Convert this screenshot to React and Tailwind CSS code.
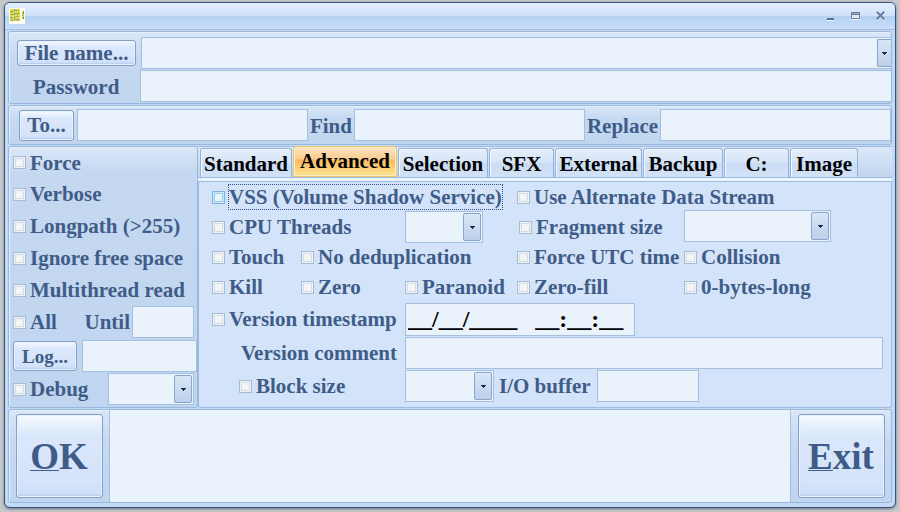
import { useState } from 'react';

const FIELD = 'bg-[#eaf2fb] border border-[#a5c0df] outline-none rounded-none';
const PANEL = 'border border-[#98b7dd] rounded-[3px] shadow-[inset_1px_1px_0_#e6f0fc]';
const PANEL_BG = 'bg-linear-to-b from-[#d9e6f8] via-[#c5d9f1] via-35% to-[#c0d5ef]';
const BUTTON = 'border border-[#839fc8] rounded-[3px] bg-[linear-gradient(#f6faff,#dae7fb_25%,#d5e3fb_80%,#cfdff8)] shadow-[inset_0_0_0_1px_#e9f2ff,inset_0_-2px_2px_#b5ccee]';

const TABS = [
  { name: 'Standard',  width: 'w-[92px]' },
  { name: 'Advanced',  width: 'w-[104px]' },
  { name: 'Selection', width: 'w-[90px]' },
  { name: 'SFX',       width: 'w-[65px]' },
  { name: 'External',  width: 'w-[87px]' },
  { name: 'Backup',    width: 'w-[80px]' },
  { name: 'C:',        width: 'w-[65px]' },
  { name: 'Image',     width: 'w-[68px]' },
];

function Check({ label, focused, className = '' }) {
  return (
    <label className={`flex items-center gap-1 whitespace-nowrap ${className}`}>
      <input
        type="checkbox"
        className={`appearance-none w-[13px] h-[13px] shrink-0 border checked:bg-[#5f86b8] ${
          focused
            ? 'border-[#7fb2e0] bg-[#e4f6ff] shadow-[inset_0_0_0_1px_#cdeafc,inset_0_0_0_2px_#9accef]'
            : 'border-[#a6bbd2] bg-[#f3f5f4] shadow-[inset_0_0_0_1px_#eef4f9,inset_0_0_0_2px_#d3dce2]'
        }`}
      />
      <span className={focused ? 'outline-1 outline-dotted outline-[#33508a]' : ''}>{label}</span>
    </label>
  );
}

function Combo({ label, className = '', flush }) {
  return (
    <div className={`relative h-8 ${className}`}>
      <select aria-label={label} className={`appearance-none w-full h-full block ${FIELD} ${flush ? 'border-r-0' : ''}`} />
      <span className={`absolute top-[2px] h-7 flex items-center justify-center border border-[#86a5cf] bg-linear-to-b from-[#d9e6f7] to-[#bdd0ea] pointer-events-none ${
        flush ? 'right-0 w-[14px] border-r-0 rounded-l-[2px]' : 'right-[2px] w-[18px] rounded-[2px]'
      }`}>
        <svg width="5" height="3" viewBox="0 0 5 3" shapeRendering="crispEdges">
          <path d="M0 0h5v1h-1v1h-1v1h-1v-1h-1v-1h-1z" fill="#1c2c47" />
        </svg>
      </span>
    </div>
  );
}

function TitleBar() {
  return (
    <div className="h-[27px] shrink-0 flex items-center justify-between pl-1 pr-[10px] rounded-t-[5px] border-b border-[#a3c0e4] bg-[linear-gradient(#e3eefd,#cfe1fa_48%,#b5d0f3_50%,#c9def9)]">
      <svg width="16" height="16" viewBox="0 0 16 16" shapeRendering="crispEdges" aria-hidden="true">
        <rect width="16" height="16" fill="#fdfdf0" />
        <path d="M1 1h10v12h-10z" fill="#dfe04e" />
        <path d="M1 3h4v1h-4zM6 2h4v1h-4zM1 6h4v1h-4zM6 5h5v1h-5zM1 9h3v1h-3zM6 8h4v1h-4zM1 12h4v1h-4zM6 11h5v1h-5z" fill="#a9ab62" />
        <path d="M5 1h1v2h-1zM5 5h1v2h-1zM5 9h1v3h-1zM2 4h1v1h-1zM8 6h1v1h-1zM2 10h1v1h-1zM8 12h1v1h-1z" fill="#8d9290" />
        <path d="M13 4h2v7h-2z" fill="#d2d34c" />
        <path d="M14 3h1v3h-1zM13 7h1v1h-1zM14 9h1v2h-1z" fill="#85894a" />
      </svg>
      <div className="flex items-center gap-[16px]">
        <button aria-label="Minimize">
          <svg width="8" height="10" viewBox="0 0 8 10" shapeRendering="crispEdges">
            <path d="M0 7h7v2h-7z" fill="#5b7194" />
            <path d="M0 9h7v1h-7z" fill="#f2f7fe" />
          </svg>
        </button>
        <button aria-label="Maximize">
          <svg width="9" height="8" viewBox="0 0 9 8" shapeRendering="crispEdges">
            <path d="M0 0h9v7h-9z" fill="#71829f" />
            <path d="M1 3h7v3h-7z" fill="#dce9fb" />
            <path d="M1 1h7v1h-7z" fill="#93a3bc" />
            <path d="M0 7h9v1h-9z" fill="#f2f7fe" />
          </svg>
        </button>
        <button aria-label="Close">
          <svg width="9" height="10" viewBox="0 0 9 10">
            <path d="M.8 1.8l7.4 7.4M8.2 1.8l-7.4 7.4" stroke="#f2f7fe" strokeWidth="1.6" />
            <path d="M.8 .8l7.4 7.4M8.2 .8l-7.4 7.4" stroke="#6a7c9b" strokeWidth="2" />
          </svg>
        </button>
      </div>
    </div>
  );
}

function SidePanel() {
  return (
    <div className={`w-[190px] shrink-0 flex flex-col gap-px pl-1 pb-[2px] ${PANEL} bg-linear-to-b from-[#dbe7f8] via-[#c4d8f1] via-10% to-[#c0d5ef]`}>
      <div>
        <Check label="Force" className="h-[31px]" />
        <Check label="Verbose" className="h-8" />
        <Check label="Longpath (>255)" className="h-8" />
        <Check label="Ignore free space" className="h-8" />
        <Check label="Multithread read" className="h-8" />
        <div className="h-8 flex items-center justify-between pr-[3px]">
          <Check label="All" />
          <div className="flex items-center gap-[2px]">
            <label htmlFor="until">Until</label>
            <input id="until" className={`w-[62px] h-8 ${FIELD}`} />
          </div>
        </div>
      </div>
      <div className="flex items-center gap-[5px] pt-px">
        <button className={`w-16 h-[30px] text-[19px] leading-none ${BUTTON}`}>Log...</button>
        <input aria-label="Log file" className={`flex-1 min-w-0 h-8 ${FIELD}`} />
      </div>
      <div className="flex items-center justify-between pr-[3px]">
        <Check label="Debug" />
        <Combo label="Debug level" className="w-[86px]" />
      </div>
    </div>
  );
}

function AdvancedTab() {
  return (
    <div className="flex-1 pl-[13px] pr-2 bg-[#d3e3f9] border border-t-0 border-[#9dbbe0] rounded-b-[3px]">
      <div className="grid grid-cols-[89fr_104fr_112fr_167fr_199fr] grid-rows-[30px_30px_30px_30px_34px_34px_32px] items-center">
        <Check label="VSS (Volume Shadow Service)" focused className="col-span-3" />
        <Check label="Use Alternate Data Stream" className="col-span-2" />

        <Check label="CPU Threads" className="col-span-2" />
        <Combo label="CPU Threads" className="w-[78px]" />
        <Check label="Fragment size" className="pl-[2px]" />
        <Combo label="Fragment size" className="w-[147px] self-end" />

        <Check label="Touch" />
        <Check label="No deduplication" className="col-span-2" />
        <Check label="Force UTC time" />
        <Check label="Collision" />

        <Check label="Kill" />
        <Check label="Zero" />
        <Check label="Paranoid" />
        <Check label="Zero-fill" />
        <Check label="0-bytes-long" />

        <Check label="Version timestamp" className="col-span-2" />
        <input
          aria-label="Version timestamp"
          defaultValue="__/__/____   __:__:__"
          className={`col-span-3 w-[230px] h-[33px] px-[2px] text-2xl leading-none text-black ${FIELD}`}
        />

        <label htmlFor="comment" className="col-span-2 text-right pr-2">Version comment</label>
        <input id="comment" className={`col-span-3 w-full h-8 ${FIELD}`} />

        <Check label="Block size" className="col-span-2 pl-[27px]" />
        <div className="col-span-3 flex items-center">
          <Combo label="Block size" className="w-[89px]" />
          <label htmlFor="iobuffer" className="pl-[5px] pr-[6px]">I/O buffer</label>
          <input id="iobuffer" className={`w-[102px] h-8 ${FIELD}`} />
        </div>
      </div>
    </div>
  );
}

export default function App() {
  const [tab, setTab] = useState('Advanced');

  return (
    <div className="min-h-screen bg-[#c6c8ca] pt-[2px] px-1 pb-1 font-['Liberation_Serif',serif] font-bold text-[21px] leading-6 text-[#3f5c88]">
      <div className="flex flex-col border border-[#35547f] rounded-[6px] bg-[#c3d9f4] shadow-[0_1px_3px_#6b7480] pb-1">
        <TitleBar />

        <div className="flex flex-col gap-px px-[3px] pt-px">
          <div className={`flex flex-col gap-px pt-[5px] pb-px ${PANEL} ${PANEL_BG}`}>
            <div className="flex items-center">
              <div className="w-[132px] shrink-0 pl-2">
                <button className={`w-[119px] h-[26px] leading-none ${BUTTON}`}>File name...</button>
              </div>
              <Combo label="File name" flush className="flex-1" />
            </div>
            <div className="flex items-center">
              <label htmlFor="password" className="w-[131px] shrink-0 pl-6 pt-px">Password</label>
              <input id="password" type="password" className={`flex-1 min-w-0 h-8 border-r-0 ${FIELD}`} />
            </div>
          </div>

          <div className={`flex items-center gap-[2px] h-10 pl-[10px] ${PANEL} ${PANEL_BG}`}>
            <button className={`w-[55px] h-[31px] leading-none mr-px ${BUTTON}`}>To...</button>
            <input aria-label="To" className={`flex-1 min-w-0 h-8 ${FIELD}`} />
            <label htmlFor="find" className="pt-px">Find</label>
            <input id="find" className={`flex-1 min-w-0 h-8 ${FIELD}`} />
            <label htmlFor="replace" className="pt-px">Replace</label>
            <input id="replace" className={`flex-1 min-w-0 h-8 ${FIELD}`} />
          </div>

          <div className="flex">
            <SidePanel />
            <div className="flex-1 min-w-0 flex flex-col">
              <div className="flex items-end h-[31px] gap-px pl-[2px] border-t border-[#9dbbe0] bg-linear-to-b from-[#dbe7f8] to-[#c1d6f0]">
                {TABS.map(t => (
                  <button
                    key={t.name}
                    onClick={() => setTab(t.name)}
                    className={`${t.width} text-black whitespace-nowrap border rounded-t-[3px] ${
                      tab === t.name
                        ? 'h-[31px] pb-[2px] border-[#e8c56e] bg-[linear-gradient(#fde3c0,#fbcd92_40%,#fbba62_45%,#fee48f)] shadow-[inset_0_0_0_1px_#ffefc9]'
                        : 'h-[29px] pt-[2px] border-[#92b3de] border-b-0 bg-[linear-gradient(#e4eefb,#d6e4f8_50%,#cadcf4_52%,#d2e2f8)] shadow-[inset_1px_1px_0_#f3f8ff]'
                    }`}
                  >
                    {t.name}
                  </button>
                ))}
              </div>
              <div className="h-[5px] bg-[#eaf4ff] border-y border-[#9dbbe0]" />
              <AdvancedTab />
            </div>
          </div>

          <div className={`flex h-[94px] ${PANEL} ${PANEL_BG}`}>
            <div className="w-[100px] shrink-0 flex items-center justify-center">
              <button className={`w-[87px] h-[84px] text-[37px] leading-none ${BUTTON}`}>
                <span className="underline decoration-1">O</span>K
              </button>
            </div>
            <textarea aria-label="Output" className={`flex-1 min-w-0 resize-none border-y-0 ${FIELD}`} />
            <div className="w-[100px] shrink-0 flex items-center justify-center">
              <button className={`w-[87px] h-[84px] text-[37px] leading-none ${BUTTON}`}>
                <span className="underline decoration-1">E</span>xit
              </button>
            </div>
          </div>
        </div>
      </div>
    </div>
  );
}
